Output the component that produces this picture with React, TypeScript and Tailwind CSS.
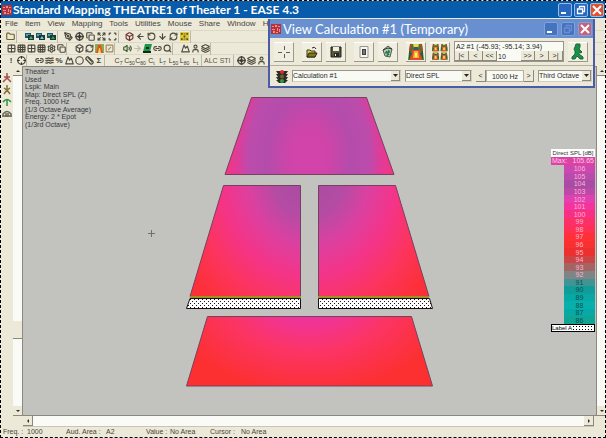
import React from "react";
import {
  ArrowDown, ArrowLeft, ArrowRight, Box, Circle, Copy, Crosshair, Expand,
  Folder, Grid2x2, Grid3x3, Layers, Link2, Mountain, PenTool, RefreshCw, RotateCcw,
  Ruler, Scan, Search, Settings, SlashSquare, User, Volume2, Waves,
} from "lucide-react";

type Kind = React.ComponentType<{ size?: number; strokeWidth?: number; color?: string; "aria-hidden"?: boolean }>;
type Tool = { name: string; icon?: Kind; text?: string; color?: string; node?: React.ReactNode };
type Group = { space: string; tools: Tool[] };

function PictureIcon({ accent }: { accent: string }) {
  return (
    <svg width="9" height="9" viewBox="0 0 9 9" aria-hidden="true">
      <rect x="0" y="1" width="6" height="5" fill="#245060" />
      <rect x="1" y="2" width="4" height="2" fill="#50a0b8" />
      <rect x="3" y="3" width="6" height="5" fill="#183838" />
      <path d="M4 7 L6 4 L8 7Z" fill={accent} />
    </svg>
  );
}

function MapIcon() {
  return (
    <svg width="9" height="9" viewBox="0 0 10 10" aria-hidden="true">
      <rect width="10" height="10" fill="#e0c838" />
      <path d="M1 1h2v2H1zM7 1h2v2H7zM1 7h2v2H1zM7 7h2v2H7zM4 4h2v2H4z" fill="#50581c" />
      <path d="M4 1h2v2H4zM4 7h2v2H4z" fill="#a88820" />
    </svg>
  );
}

function TowerIcon() {
  return (
    <svg width="9" height="9" viewBox="0 0 9 9" aria-hidden="true">
      <rect width="9" height="9" fill="#88b048" />
      <path d="M3 1h3l2 8H1z" fill="#e05030" /><path d="M4 4h1l1 5H3z" fill="#f0d840" />
    </svg>
  );
}

function SpokeIcon() {
  return (
    <svg width="9" height="9" viewBox="0 0 9 9" fill="none" aria-hidden="true">
      <circle cx="4.500" cy="4.500" r="3.500" stroke="#58544c" strokeWidth="1.500" />
      <path d="M4.500 0v9M0 4.500h9" stroke="#48443c" strokeWidth="1.300" />
      <circle cx="4.500" cy="4.500" r="1.500" fill="#383430" />
    </svg>
  );
}

const rowOne: Group[] = [
  { space: "ml-1", tools: [{ name: "Open", icon: Folder, color: "#706020" }] },
  { space: "ml-[7px]", tools: [
    { name: "Area view", node: <PictureIcon accent="#48b070" /> },
    { name: "Room view", node: <PictureIcon accent="#70c8e0" /> },
    { name: "Seat view", node: <PictureIcon accent="#30a840" /> },
  ] },
  { space: "ml-[5px]", tools: [
    { name: "Pick", icon: PenTool }, { name: "Center", node: <SpokeIcon /> }, { name: "Copy", icon: Copy },
    { name: "Expand", icon: Expand }, { name: "Fit", icon: Scan },
  ] },
  { space: "ml-[5px]", tools: [
    { name: "Home", icon: Box, color: "#703030" }, { name: "Back", icon: ArrowLeft }, { name: "Rotate", icon: RotateCcw },
    { name: "Down", icon: ArrowDown }, { name: "Turn", icon: RefreshCw }, { name: "Map colours", node: <MapIcon /> },
  ] },
];

const rowTwo: Group[] = [
  { space: "ml-[5px]", tools: [
    { name: "Tile", icon: Grid2x2 }, { name: "Grid", icon: Grid3x3 }, { name: "Split", icon: Grid2x2 },
    { name: "Panes", icon: Grid3x3 }, { name: "Options", icon: Settings }, { name: "Layers", icon: Copy },
  ] },
  { space: "ml-[7px]", tools: [
    { name: "Solid", icon: Box }, { name: "Refresh", icon: RefreshCw }, { name: "Colours", node: <TowerIcon /> },
    { name: "Palette", icon: SlashSquare, color: "#a08858" },
  ] },
  { space: "ml-[7px]", tools: [
    { name: "Speaker", icon: Volume2, color: "#38582c" }, { name: "Next", icon: ArrowRight, color: "#c0bcb0" },
    { name: "Surface", node: <svg width="9" height="9" viewBox="0 0 9 9" aria-hidden="true"><path d="M2 0h7L7 8H0z" fill="#189848" /><path d="M0 8h8M3 4h3" stroke="#102818" strokeWidth="2" /></svg> },
    { name: "Link", icon: Link2 }, { name: "Find", icon: Search },
  ] },
  { space: "ml-[7px]", tools: [{ name: "Profile", icon: Mountain }, { name: "Listener", icon: User }, { name: "Seats", icon: Layers }] },
];

const rowThree: Group[] = [
  { space: "ml-[5px]", tools: [{ name: "Calculate", text: "!" }, { name: "Move", icon: Crosshair, color: "#302c28" }] },
  { space: "ml-[7px]", tools: [
    { name: "Glasses", icon: Link2 }, { name: "Spectrum", icon: Waves }, { name: "Percent", text: "%" },
    { name: "Sphere", icon: Mountain }, { name: "Exclude", icon: Circle }, { name: "Distance", icon: Ruler }, { name: "Sum", text: "Σ" },
  ] },
];

const ratios = [["C", "7"], ["C", "50"], ["C", "80"], ["C", "t"], ["L", "7"], ["L", "50"], ["L", "80"], ["L", "t"]];

function ToolButton({ tool, width }: { tool: Tool; width: string }) {
  const Icon = tool.icon;
  return (
    <button type="button" aria-label={tool.name} className={`flex h-3 items-center justify-center text-[8px] leading-3 font-bold text-[#403c34] ${width}`}>
      {Icon && <Icon size={9} strokeWidth={3} color={tool.color ?? "#4c483c"} aria-hidden={true} />}
      {tool.node}
      {tool.text && <span>{tool.text}</span>}
    </button>
  );
}

function Toolbar({ groups, label, width, children }: { groups: Group[]; label: string; width: string; children?: React.ReactNode }) {
  return (
    <div role="toolbar" aria-label={label} className="flex h-3 items-center border-t border-[#dcd8c8]">
      {groups.map((group, i) => (
        <div key={i} className={`flex border-r border-[#bcb8a8] ${group.space}`}>
          {group.tools.map((tool) => <ToolButton key={tool.name} tool={tool} width={width} />)}
        </div>
      ))}
      {children}
    </div>
  );
}

function Logo() {
  return (
    <svg className="size-[10px] shrink-0" viewBox="0 0 10 10" aria-hidden="true">
      <rect width="10" height="10" fill="#b83038" />
      <path d="M1 2h2v1H1zM4 1h2v2H4zM7 2h2v1H7zM1 5h3v1H1zM6 4h1v3H6zM8 5h1v3H8zM2 7h2v2H2zM5 8h2v1H5z" fill="#e89090" />
    </svg>
  );
}

function WindowButton({ kind, dim }: { kind: "Minimize" | "Restore" | "Close"; dim?: boolean }) {
  const fill = kind === "Close" ? (dim ? "bg-[#c86078]" : "bg-[#e05030]") : dim ? "bg-[#4474c0]" : "bg-[#2868c0]";
  return (
    <button type="button" aria-label={kind} className={`flex size-[14px] items-center justify-center rounded-xs border ${dim ? "border-[#80a0dc]" : "border-[#98bce4]"} ${fill}`}>
      <svg width="10" height="10" viewBox="0 0 10 10" fill="none" stroke={dim && kind === "Restore" ? "#6c8cd0" : "white"} strokeWidth="2" aria-hidden="true">
        {kind === "Minimize" && <path d="M1 8h5" />}
        {kind === "Restore" && <path d="M3.500 3V1.500h5v5H7M1.500 4h5v4.500h-5z" strokeWidth="1.300" />}
        {kind === "Close" && <path d="M1 1l8 8M9 1l-8 8" />}
      </svg>
    </button>
  );
}

function ArrowButton({ label, dir }: { label: string; dir: "up" | "down" | "left" | "right" }) {
  const path = { up: "M1 4l2-2 2 2z", down: "M1 2l2 2 2-2z", left: "M4 1L2 3l2 2z", right: "M2 1l2 2-2 2z" }[dir];
  return (
    <button type="button" aria-label={label} className="flex size-[10px] shrink-0 items-center justify-center border-r border-b border-[#8c897c] bg-[#ece9d8]">
      <svg width="6" height="6" viewBox="0 0 6 6" aria-hidden="true"><path d={path} fill="#302c28" /></svg>
    </button>
  );
}

function Select({ label, value, width }: { label: string; value: string; width: string }) {
  return (
    <div className={`relative ${width}`}>
      <select aria-label={label} defaultValue={value} className="block h-3 w-full appearance-none border border-[#98958a] border-r-[#d4d0c4] border-b-[#d4d0c4] bg-[#fafaf4] text-[7px] leading-[10px] text-[#282828]">
        <option>{value}</option>
      </select>
      <span className="pointer-events-none absolute top-px right-px flex h-[10px] w-[9px] items-center justify-center border-r border-b border-[#8c897c] bg-[#ece9d8]">
        <svg width="5" height="4" viewBox="0 0 5 4" aria-hidden="true"><path d="M0 0h5L2.500 3z" fill="#282828" /></svg>
      </span>
    </div>
  );
}

function BigButton({ label, space, children }: { label: string; space?: string; children: React.ReactNode }) {
  return (
    <button type="button" aria-label={label} className={`flex size-5 shrink-0 items-center justify-center border-t border-r border-b border-t-white border-r-[#9c998c] border-b-[#9c998c] bg-[#f0eee0] ${space ?? ""}`}>
      {children}
    </button>
  );
}

function FaceMap({ x, y, s }: { x: number; y: number; s: number }) {
  return (
    <g transform={`translate(${x} ${y}) scale(${s})`}>
      <path d="M2 0h12l2 16H0z" fill="#487828" />
      <path d="M5 0h6l-1 4H6z" fill="#f0d840" />
      <path d="M6 3h4v3H6z" fill="#305890" />
      <path d="M4 6h8l2 10H2z" fill="#e84828" />
      <path d="M6 7h4l1 7H5z" fill="#f0b828" />
      <path d="M7 9h2v4H7z" fill="#f8f080" />
      <path d="M1 6l3 4-3 5zM15 6l-3 4 3 5z" fill="#285c40" />
      <path d="M2 1h2L3 6H1zM14 1h-2l1 5h2z" fill="#c04030" />
    </g>
  );
}

function Navigator() {
  return (
    <div className="ml-1 w-[110px] border border-[#98958a] bg-[#fafaf4] text-[7px] text-[#282828]">
      <output className="block h-[9px] pl-px leading-[9px]">A2 #1 (-45.93; -95.14; 3.94)</output>
      <div className="flex h-[10px] bg-[#ece9d8] leading-[9px]">
        {[["First", "|<"], ["Previous", "<"], ["Back ten", "<<"]].map(([name, sign]) => (
          <button key={name} type="button" aria-label={name} className="w-[14px] border-r border-b border-[#8c897c]">{sign}</button>
        ))}
        <input aria-label="Step" defaultValue="10" className="w-[24px] bg-[#fafaf4] pl-px" />
        {[["Forward ten", ">>"], ["Next", ">"], ["Last", ">|"]].map(([name, sign]) => (
          <button key={name} type="button" aria-label={name} className="w-[14px] border-r border-b border-[#8c897c]">{sign}</button>
        ))}
      </div>
    </div>
  );
}

function CalculationWindow() {
  return (
    <section aria-label="View Calculation" className="absolute top-[18px] right-[10px] z-10 w-[327px] border-2 border-t-0 border-[#4c5ca4] bg-[#ece9d8]">
      <header className="flex h-[19px] items-center bg-[#6890d0] pl-px">
        <Logo />
        <h2 className="ml-[2px] flex-1 font-[Lato,sans-serif] text-[13px] leading-[18px] whitespace-nowrap text-white">View Calculation #1 (Temporary)</h2>
        <div className="flex gap-[3px] pr-px">
          <WindowButton kind="Minimize" dim />
          <WindowButton kind="Restore" dim />
          <WindowButton kind="Close" dim />
        </div>
      </header>
      <div className="flex h-[28px] items-center border-b border-[#b4b0a0] pl-1">
        <BigButton label="Probe">
          <svg width="14" height="14" viewBox="0 0 14 14" stroke="#605c54" aria-hidden="true"><path d="M7.500 1v4M7.500 9v4M1 7.500h4M9 7.500h4" /></svg>
        </BigButton>
        <BigButton label="Open" space="ml-2">
          <svg width="14" height="12" viewBox="0 0 14 12" aria-hidden="true">
            <path d="M2 4h3l1 1h4v6H2z" fill="#d8cc50" stroke="#383818" /><path d="M2 11l2-4h8l-2 4z" fill="#807818" stroke="#282810" /><path d="M7 2q3-2 4 1" fill="none" stroke="#282828" />
          </svg>
        </BigButton>
        <BigButton label="Save" space="ml-1">
          <svg width="12" height="12" viewBox="0 0 12 12" aria-hidden="true"><path d="M1 1h10v10H1z" fill="#585838" stroke="#202020" /><path d="M3 1h6v4H3z" fill="#f0eee0" /><path d="M4 7h5v4H4z" fill="#282828" /><path d="M5 8h1v2H5z" fill="#f0eee0" /></svg>
        </BigButton>
        <BigButton label="Report" space="ml-2">
          <svg width="12" height="12" viewBox="0 0 12 12" aria-hidden="true"><path d="M2 .5h8v11H2z" fill="#f8f8f0" stroke="#98948c" /><path d="M4 3h4v6H4z" fill="#404040" /><path d="M5 5h2M5 7h2" stroke="#b0b0b0" /></svg>
        </BigButton>
        <BigButton label="Discard" space="ml-1">
          <svg width="13" height="13" viewBox="0 0 13 13" aria-hidden="true"><path d="M2 5l5-4 4 3-2 8-5-1z" fill="#c0ccc0" stroke="#505850" /><path d="M5 6l3 4M8 5l-2 6M4 8l5-1" stroke="#208040" strokeWidth="1.500" /><path d="M2 5l5-2 4 1" fill="none" stroke="#303030" /></svg>
        </BigButton>
        <BigButton label="Map" space="ml-2"><svg width="16" height="16" viewBox="0 0 16 16" aria-hidden="true"><FaceMap x={0} y={0} s={1} /></svg></BigButton>
        <BigButton label="Map set" space="ml-1">
          <svg width="16" height="16" viewBox="0 0 16 16" aria-hidden="true"><FaceMap x={0} y={0} s={0.45} /><FaceMap x={8.5} y={0} s={0.45} /><FaceMap x={0} y={8.5} s={0.45} /><FaceMap x={8.5} y={8.5} s={0.45} /></svg>
        </BigButton>
        <Navigator />
        <BigButton label="Exit" space="ml-1">
          <svg width="14" height="17" viewBox="0 0 14 17" aria-hidden="true"><path d="M5 1h4v3l-1 2 3 3-1 1-2-1v2l4 3v2H9l-3-3-2 3H1v-2l3-3V8L3 6l1-2z" fill="#189048" stroke="#206838" /></svg>
        </BigButton>
      </div>
      <div className="flex h-[20px] items-center pl-[6px]">
        <svg className="shrink-0" width="12" height="15" viewBox="0 0 12 15" role="img" aria-label="Traffic light">
          <path d="M0 2h12l-2 3h2l-2 3h2l-2 3h2l-3 3H3l-3-3h2L0 8h2L0 5h2z" fill="#302c28" /><circle cx="6" cy="3" r="2" fill="#d83030" /><circle cx="6" cy="7.500" r="2" fill="#706030" /><circle cx="6" cy="12" r="2" fill="#28a040" />
        </svg>
        <div className="ml-1 flex items-center gap-1">
          <Select label="Calculation" value="Calculation #1" width="w-[109px]" />
          <Select label="Quantity" value="Direct SPL" width="w-[67px]" />
          <div className="flex text-[7px] leading-[10px] text-[#282828]">
            <button type="button" aria-label="Lower frequency" className="h-3 w-[10px] border-r border-b border-[#8c897c]">&lt;</button>
            <input aria-label="Frequency" defaultValue="1000 Hz" className="h-3 w-[38px] border border-[#b4b0a0] bg-[#fafaf4] text-center" />
            <button type="button" aria-label="Higher frequency" className="h-3 w-[10px] border-r border-b border-[#8c897c]">&gt;</button>
          </div>
          <Select label="Bandwidth" value="Third Octave" width="w-[54px]" />
        </div>
      </div>
    </section>
  );
}

const legend = [
  ["106", "bg-[#cc48b0]"], ["105", "bg-[#b84cac]"], ["104", "bg-[#a84ca4]"], ["103", "bg-[#bc48a8]"], ["102", "bg-[#e040b0]"],
  ["101", "bg-[#f4349c]"], ["100", "bg-[#f83084]"], ["99", "bg-[#fc3068]"], ["98", "bg-[#ff3054]"], ["97", "bg-[#ff3038]"],
  ["96", "bg-[#f83030]"], ["95", "bg-[#ec3030]"], ["94", "bg-[#cc4444]"], ["93", "bg-[#a46464]"], ["92", "bg-[#808484]"],
  ["91", "bg-[#409494]"], ["90", "bg-[#109c98]"], ["89", "bg-[#08a8a4]"], ["88", "bg-[#08b0ac]"], ["87", "bg-[#08a8a4]"], ["86", "bg-[#10a494]"],
];

function Legend() {
  return (
    <aside aria-label="Direct SPL legend" className="relative mt-[82px] mr-px w-[44px] text-[7px] leading-[8px]">
      <h3 className="h-2 bg-white text-center text-[6px] whitespace-nowrap text-[#303030]">Direct SPL [dB]</h3>
      <p className="flex h-2 justify-between bg-[#dc44a4] px-px text-[#fcc8ec]"><span>Max:</span><span>105.65</span></p>
      <ul className="ml-[13px] grid h-[159px] auto-rows-fr">
        {legend.map(([value, tone]) => (
          <li key={value} className={`${tone} flex items-center justify-center leading-[7px] ${Number(value) > 91 ? "text-[#fcb4d0]" : "text-[#085050]"}`}>{value}</li>
        ))}
      </ul>
      <p className="flex h-2 border border-black bg-white text-[6px] leading-[6px] text-black">
        <span>Label A</span>
        <span className="flex-1 bg-[radial-gradient(#000_25%,transparent_30%)] bg-size-[3px_3px]" />
      </p>
    </aside>
  );
}

function SoundMap() {
  return (
    <svg className="absolute inset-0 size-full" viewBox="23 67 573 348" preserveAspectRatio="xMidYMid meet" role="img" aria-label="Direct SPL over audience areas">
      <defs>
        <radialGradient id="rear" gradientUnits="userSpaceOnUse" cx="0" cy="0" r="1" gradientTransform="translate(309 158) scale(84 130)">
          <stop offset="0" stopColor="#d444ac" /><stop offset=".22" stopColor="#d044a8" /><stop offset=".5" stopColor="#b44cac" /><stop offset=".72" stopColor="#bc4cac" /><stop offset=".85" stopColor="#e03c98" /><stop offset="1" stopColor="#f43484" />
        </radialGradient>
        <radialGradient id="middle" gradientUnits="userSpaceOnUse" cx="0" cy="0" r="1" gradientTransform="translate(309 175) scale(145 170)">
          <stop offset="0" stopColor="#a44ca0" /><stop offset=".25" stopColor="#b44ca4" /><stop offset=".42" stopColor="#dc40a0" /><stop offset=".6" stopColor="#f43488" /><stop offset=".8" stopColor="#fc345c" /><stop offset="1" stopColor="#fc3038" />
        </radialGradient>
        <radialGradient id="front" gradientUnits="userSpaceOnUse" cx="0" cy="0" r="1" gradientTransform="translate(309 290) scale(145 104)">
          <stop offset="0" stopColor="#dc3ca4" /><stop offset=".3" stopColor="#f03498" /><stop offset=".6" stopColor="#fc3464" /><stop offset="1" stopColor="#fc3030" />
        </radialGradient>
        <pattern id="dots" width="4" height="4" patternUnits="userSpaceOnUse">
          <rect width="4" height="4" fill="white" /><path d="M0 1h1v1H0zM2 3h1v1H2z" fill="#201018" />
        </pattern>
      </defs>
      <g stroke="#784060" strokeWidth="1">
        <path d="M251.500 97.500H366.500L394 174.500H225z" fill="url(#rear)" />
        <path d="M223.500 185.500H300.500V296.500H190z" fill="url(#middle)" />
        <path d="M318.500 185.500H395.500L429 296.500H318.500z" fill="url(#middle)" />
        <path d="M207.500 316.500H411.500L432.500 386H186.500z" fill="url(#front)" />
      </g>
      <path d="M190 298.500H300.500V308.500H186.500zM318.500 298.500H429.500L432.500 308.500H318.500z" fill="url(#dots)" stroke="#181018" />
      <path d="M190 297H301M318 297H429" stroke="#a09020" strokeWidth="2" />
      <path d="M148 233.500h7M151.500 230v7" stroke="#707070" />
    </svg>
  );
}

const areaInfo = ["Theater 1", "Used", "Lspk: Main", "Map: Direct SPL (Z)", "Freq. 1000 Hz", "(1/3 Octave Average)", "Energy: 2 * Epot", "(1/3rd Octave)"];
const menus = ["File", "Item", "View", "Mapping", "Tools", "Utilities", "Mouse", "Share", "Window", "Help"];
const sideTools = [
  { name: "Section", path: "M5 0v6M1 9l4-4 4 4M2 4h6", color: "#a05048" },
  { name: "Lamp", path: "M5 0v4M2 3l3 2 3-2M2 9l3-4 3 4", color: "#807038" },
  { name: "Dome", path: "M1 5q4-5 8 0M5 3v6", color: "#309040" },
  { name: "Seat", path: "M1 8V5q4-5 8 0v3M1 7h8M4 4v4M6 4v4", color: "#686458" },
];

export default function App() {
  return (
    <main className="relative flex h-screen flex-col overflow-hidden border border-dashed border-black bg-[#ece9d8] font-['Liberation_Sans',Arial,sans-serif]">
      <header className="flex h-[17px] shrink-0 items-center bg-[#085cac] pr-px pl-px">
        <Logo />
        <h1 className="ml-px flex-1 font-[Lato,sans-serif] text-[12px] leading-4 font-bold whitespace-nowrap text-white">Standard Mapping THEATRE1 of Theater 1 - EASE 4.3</h1>
        <div className="flex gap-[2px]">
          <WindowButton kind="Minimize" />
          <WindowButton kind="Restore" />
          <WindowButton kind="Close" />
        </div>
      </header>
      <nav aria-label="Main menu" className="flex h-3 shrink-0 gap-[7px] pl-1 text-[8px] leading-3 text-[#484440]">
        {menus.map((menu) => <button key={menu} type="button">{menu}</button>)}
      </nav>
      <div className="shrink-0">
        <Toolbar label="View tools" groups={rowOne} width="w-[11px]" />
        <Toolbar label="Area tools" groups={rowTwo} width="w-[10px]" />
        <Toolbar label="Quantity tools" groups={rowThree} width="w-[10px]">
          <div className="ml-[8px] flex border-r border-[#bcb8a8] text-[7px] leading-3 text-[#403c34]">
            {ratios.map(([letter, sub]) => (
              <button key={letter + sub} type="button" className="flex h-3 w-[11px] items-center justify-center">
                {letter}<span className="mt-1 text-[5px]">{sub}</span>
              </button>
            ))}
          </div>
          <div className="ml-[2px] flex gap-[2px] border-r border-[#bcb8a8] pr-[2px] text-[7px] leading-3 text-[#585448]">
            <button type="button">ALC</button>
            <button type="button">STI</button>
          </div>
          <div className="ml-[3px] flex">
            {[{ name: "Rays", node: <SpokeIcon /> }, { name: "Lines", icon: Layers }, { name: "Person", icon: User }].map((tool) => <ToolButton key={tool.name} tool={tool} width="w-[10px]" />)}
          </div>
        </Toolbar>
      </div>
      <div className="flex min-h-0 flex-1">
        <div role="toolbar" aria-label="Side tools" className="flex w-3 shrink-0 flex-col items-center pt-[6px]">
          {sideTools.map(({ name, path, color }) => (
            <button key={name} type="button" aria-label={name} className="flex h-3 w-3 items-center justify-center">
              <svg width="10" height="10" viewBox="0 0 10 10" fill="none" stroke={color} strokeWidth="1.500" aria-hidden="true"><path d={path} /></svg>
            </button>
          ))}
        </div>
        <div className="flex min-w-0 flex-1 flex-col">
          <div className="flex min-h-0 flex-1">
            <div className="flex w-[10px] shrink-0 flex-col border-r border-[#8c897c] bg-[#fafaf6]">
              <ArrowButton label="Scroll up" dir="up" />
              <div className="flex-[243]" />
              <div className="h-[18px] border-b border-[#8c897c] bg-[#ece9d8]" />
              <div className="flex-[66]" />
              <ArrowButton label="Scroll down" dir="down" />
            </div>
            <div className="relative flex min-w-0 flex-1 items-start justify-between border-t border-b border-[#88887c] bg-[#c2c3bf]">
              <SoundMap />
              <div className="relative mt-px ml-[2px] grid h-[60px] grid-rows-8 text-[7px] leading-[8px] whitespace-nowrap text-[#383838]">
                {areaInfo.map((line) => <p key={line}>{line}</p>)}
              </div>
              <Legend />
            </div>
            <div className="flex w-[9px] shrink-0 flex-col border-l border-[#8c897c] bg-[#fafaf6]">
              <ArrowButton label="Up" dir="up" />
              <div className="flex-1" />
              <ArrowButton label="Down" dir="down" />
            </div>
          </div>
          <div className="flex h-[11px] shrink-0 items-center">
            <div className="w-[10px]" />
            <div className="flex h-[11px] flex-1 border-b border-[#c8c4b8] bg-[#fafaf6]">
              <ArrowButton label="Scroll left" dir="left" />
              <div className="flex-1" />
              <ArrowButton label="Scroll right" dir="right" />
            </div>
            <div className="w-[11px]" />
          </div>
        </div>
      </div>
      <footer className="flex h-[10px] shrink-0 pl-[2px] text-[7px] leading-[9px] whitespace-nowrap text-[#48443c]">
        <span className="w-[24px]">Freq. :</span><span className="w-[39px]">1000</span>
        <span className="w-[40px]">Aud. Area :</span><span className="w-[40px]">A2</span>
        <span className="w-[24px]">Value :</span><span className="w-[40px]">No Area</span>
        <span className="w-[31px]">Cursor :</span><span>No Area</span>
      </footer>
      <CalculationWindow />
    </main>
  );
}
